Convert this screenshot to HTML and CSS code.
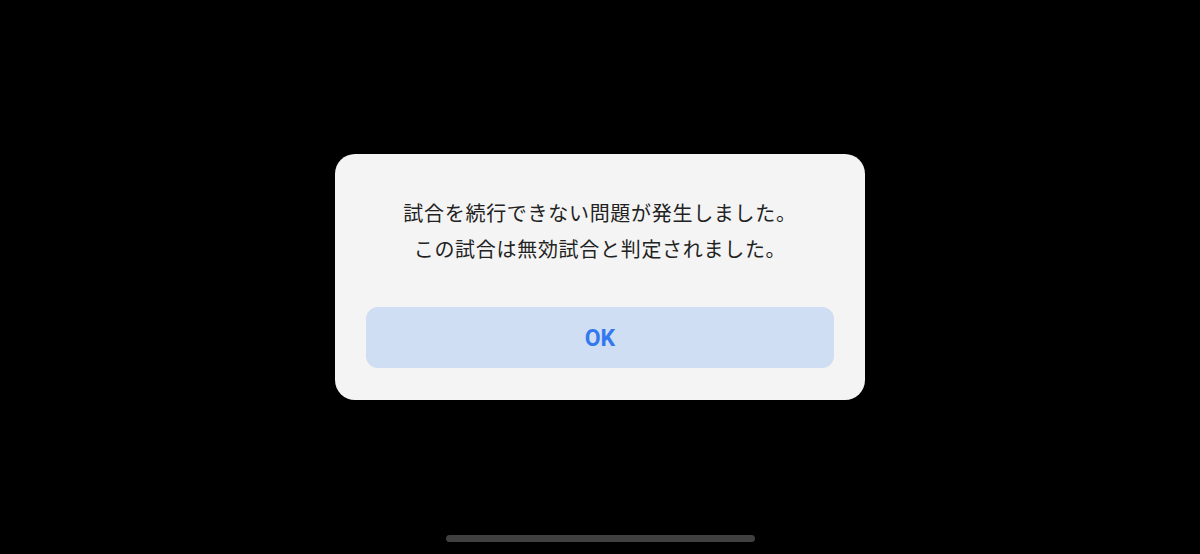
FILE: index.html
```html
<!DOCTYPE html>
<html>
<head>
    <meta charset="utf-8" />
    <title>試合エラー</title>
    <link rel="stylesheet" href="styles.css">
</head>
<body>
    <div class="screen">
        <div class="dialog">
            <p class="message">試合を続行できない問題が発生しました。<br>この試合は無効試合と判定されました。</p>
            <button type="button" class="btn">OK</button>
        </div>
        <div class="home-bar"></div>
    </div>
</body>
</html>
```

FILE: styles.css
```css
body {
    margin: 0;
    background-color: #000;
    font-family: "Noto Sans CJK JP", "Noto Sans", sans-serif;
}

.screen {
    position: relative;
    height: 554px;
    display: flex;
    align-items: center;
    justify-content: center;
}

.dialog {
    width: 530px;
    box-sizing: border-box;
    padding: 41px 31px 32px;
    background-color: #f4f4f4;
    border-radius: 20px;
}

.message {
    margin: 0 0 40px;
    font-size: 20px;
    line-height: 36px;
    letter-spacing: 0.7px;
    color: #222;
    text-align: center;
}

.btn {
    display: block;
    width: 100%;
    height: 61px;
    border: none;
    border-radius: 12px;
    background-color: #cfdef2;
    color: #3478f0;
    font-family: Roboto, "Noto Sans", sans-serif;
    font-size: 23px;
    font-weight: bold;
    padding-top: 2px;
    cursor: pointer;
}

.home-bar {
    position: absolute;
    left: 446px;
    bottom: 12px;
    width: 309px;
    height: 7px;
    border-radius: 4px;
    background-color: #404040;
}
```
